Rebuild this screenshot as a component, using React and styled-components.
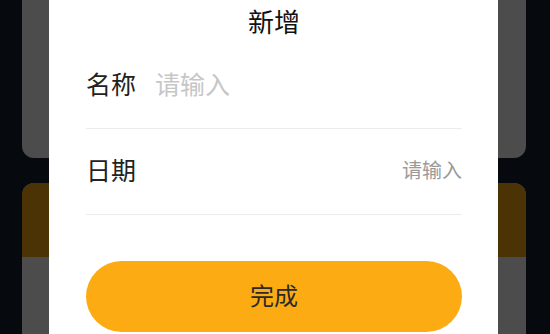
import React from "react";
import styled, { createGlobalStyle } from "styled-components";

const Global = createGlobalStyle`
  html, body { margin: 0; padding: 0; }
  body {
    width: 550px;
    height: 334px;
    overflow: hidden;
    background: #14212f;
    font-family: "Noto Sans CJK SC", "Noto Sans", sans-serif;
  }
`;

const Page = styled.div`
  display: flex;
  flex-direction: column;
  gap: 25px;
  padding: 0 24px 0 22px;
  margin-top: -40px;
`;

const Card = styled.div`
  height: ${(p) => p.$h}px;
  border-radius: ${(p) => (p.$open ? "12px 12px 0 0" : "12px")};
  background: #fff;
  overflow: hidden;
  display: flex;
  flex-direction: column;
`;

const CardHeader = styled.div`
  height: 74px;
  background: #fdab13;
`;

const Overlay = styled.div`
  position: fixed;
  inset: 0;
  background: rgba(0, 0, 0, 0.7);
  display: flex;
  align-items: stretch;
  padding-left: 49px;
`;

const Modal = styled.div`
  width: 449px;
  background: #fff;
  box-sizing: border-box;
  padding: 0 36px 0 37px;
  display: flex;
  flex-direction: column;
`;

const Title = styled.div`
  height: 43px;
  box-sizing: border-box;
  padding-bottom: 2px;
  display: flex;
  align-items: center;
  justify-content: center;
  font-size: 26px;
  color: #111;
`;

const Row = styled.div`
  height: 86px;
  box-sizing: border-box;
  padding-bottom: 5px;
  display: flex;
  align-items: center;
  border-bottom: 1px solid #ececec;
  gap: 19px;
`;

const Label = styled.div`
  font-size: 25px;
  color: #222;
  flex-shrink: 0;
`;

const Input = styled.input`
  flex: 1;
  min-width: 0;
  border: none;
  outline: none;
  background: transparent;
  padding: 0;
  font-family: inherit;
  font-size: ${(p) => p.$size}px;
  text-align: ${(p) => p.$align};
  color: #222;
  &::placeholder {
    color: ${(p) => p.$ph};
  }
`;

const Button = styled.button`
  margin-top: 46px;
  height: 71px;
  flex-shrink: 0;
  box-sizing: border-box;
  border: none;
  border-radius: 36px;
  background: #fdab13;
  font-family: inherit;
  font-size: 24px;
  color: #2a2a2a;
  display: flex;
  align-items: center;
  justify-content: center;
  padding: 0 0 4px;
`;

export default function App() {
  return (
    <>
      <Global />
      <Page>
        <Card $h={198} />
        <Card $h={151} $open>
          <CardHeader />
        </Card>
      </Page>
      <Overlay>
        <Modal>
          <Title>新增</Title>
          <Row>
            <Label>名称</Label>
            <Input $size={25} $align="left" $ph="#c6c6c6" placeholder="请输入" />
          </Row>
          <Row>
            <Label>日期</Label>
            <Input $size={20} $align="right" $ph="#9a9a9a" placeholder="请输入" />
          </Row>
          <Button>完成</Button>
        </Modal>
      </Overlay>
    </>
  );
}
